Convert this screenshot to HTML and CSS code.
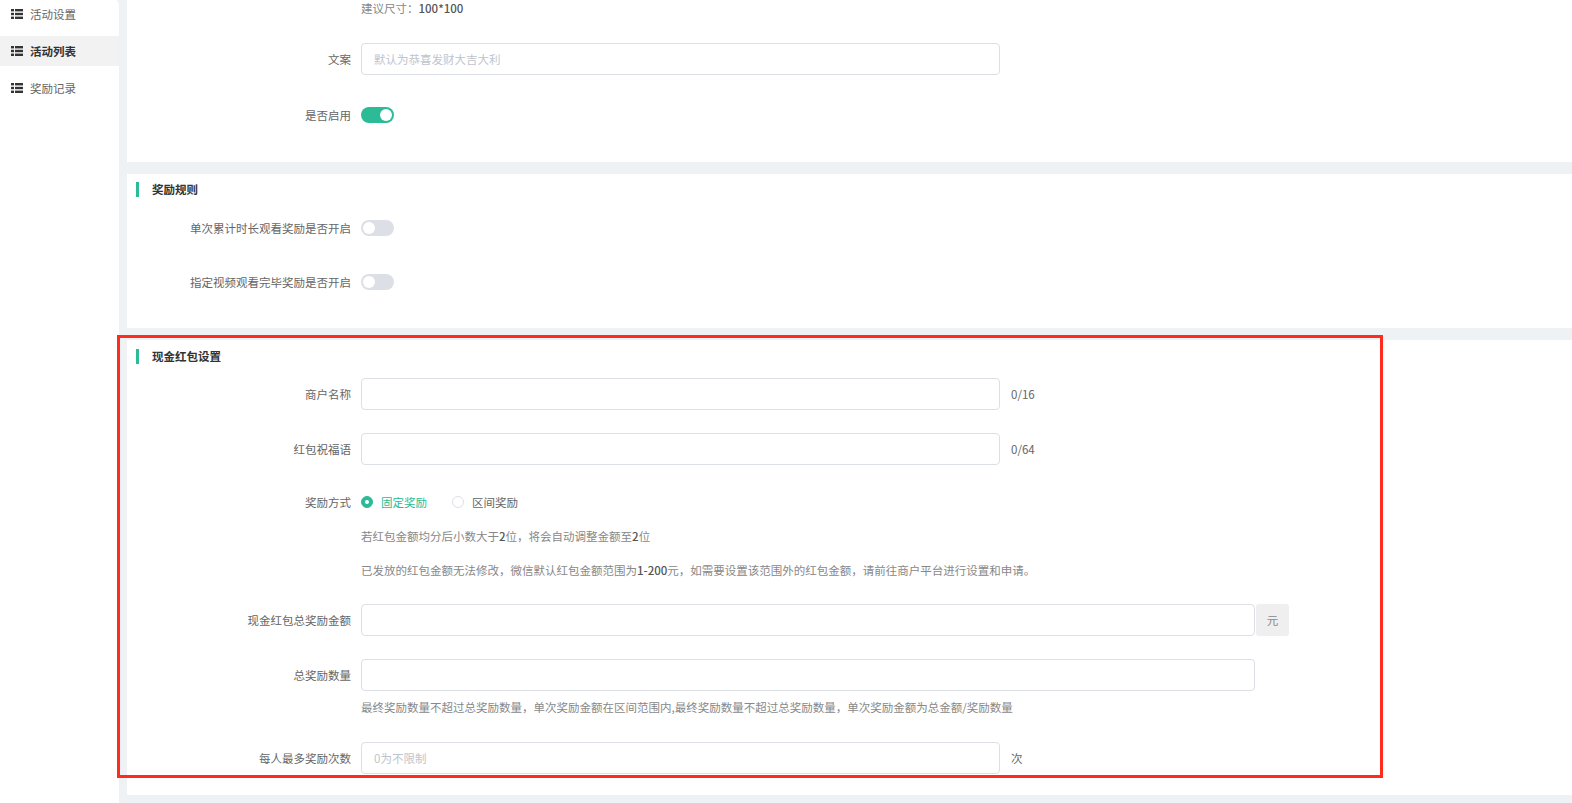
FILE: index.html
```html
<!DOCTYPE html>
<html lang="zh-CN">
<head>
<meta charset="utf-8">
<title>现金红包设置</title>
<link rel="stylesheet" href="styles.css">
</head>
<body>
<div class="app">
  <aside class="sidebar">
    <div class="nav-item">
      <svg class="nav-icon" viewBox="0 0 12 10" width="12" height="10"><rect x="0" y="0" width="3" height="2.4"/><rect x="4" y="0" width="8" height="2.4"/><rect x="0" y="3.8" width="3" height="2.4"/><rect x="4" y="3.8" width="8" height="2.4"/><rect x="0" y="7.6" width="3" height="2.4"/><rect x="4" y="7.6" width="8" height="2.4"/></svg>
      <span>活动设置</span>
    </div>
    <div class="nav-item active">
      <svg class="nav-icon" viewBox="0 0 12 10" width="12" height="10"><rect x="0" y="0" width="3" height="2.4"/><rect x="4" y="0" width="8" height="2.4"/><rect x="0" y="3.8" width="3" height="2.4"/><rect x="4" y="3.8" width="8" height="2.4"/><rect x="0" y="7.6" width="3" height="2.4"/><rect x="4" y="7.6" width="8" height="2.4"/></svg>
      <span>活动列表</span>
    </div>
    <div class="nav-item">
      <svg class="nav-icon" viewBox="0 0 12 10" width="12" height="10"><rect x="0" y="0" width="3" height="2.4"/><rect x="4" y="0" width="8" height="2.4"/><rect x="0" y="3.8" width="3" height="2.4"/><rect x="4" y="3.8" width="8" height="2.4"/><rect x="0" y="7.6" width="3" height="2.4"/><rect x="4" y="7.6" width="8" height="2.4"/></svg>
      <span>奖励记录</span>
    </div>
  </aside>

  <main class="main">
    <section class="card card-basic">
      <div class="hint-row size-hint">建议尺寸：<span class="num">100*100</span></div>
      <div class="form-item row-copy">
        <label class="form-label">文案</label>
        <div class="input normal"><span class="placeholder">默认为恭喜发财大吉大利</span></div>
      </div>
      <div class="form-item row-enable">
        <label class="form-label">是否启用</label>
        <span class="switch on"><span class="knob"></span></span>
      </div>
    </section>

    <section class="card card-rules">
      <h3 class="section-title">奖励规则</h3>
      <div class="form-item row-rule1">
        <label class="form-label">单次累计时长观看奖励是否开启</label>
        <span class="switch"><span class="knob"></span></span>
      </div>
      <div class="form-item row-rule2">
        <label class="form-label">指定视频观看完毕奖励是否开启</label>
        <span class="switch"><span class="knob"></span></span>
      </div>
    </section>

    <section class="card card-cash">
      <h3 class="section-title">现金红包设置</h3>
      <div class="form-item row-merchant">
        <label class="form-label">商户名称</label>
        <div class="input normal"></div>
        <span class="suffix">0/16</span>
      </div>
      <div class="form-item row-wish">
        <label class="form-label">红包祝福语</label>
        <div class="input normal"></div>
        <span class="suffix">0/64</span>
      </div>
      <div class="form-item row-mode">
        <label class="form-label">奖励方式</label>
        <div class="radio-group">
          <span class="radio checked"><span class="radio-dot"></span><span class="radio-text">固定奖励</span></span>
          <span class="radio"><span class="radio-dot"></span><span class="radio-text">区间奖励</span></span>
        </div>
      </div>
      <div class="hint-row hint-1">若红包金额均分后小数大于<span class="num">2</span>位，将会自动调整金额至<span class="num">2</span>位</div>
      <div class="hint-row hint-2">已发放的红包金额无法修改，微信默认红包金额范围为<span class="num">1-200</span>元，如需要设置该范围外的红包金额，请前往商户平台进行设置和申请。</div>
      <div class="form-item row-total">
        <label class="form-label">现金红包总奖励金额</label>
        <div class="input wide"></div>
        <span class="addon">元</span>
      </div>
      <div class="form-item row-count">
        <label class="form-label">总奖励数量</label>
        <div class="input wide"></div>
      </div>
      <div class="hint-row hint-3">最终奖励数量不超过总奖励数量，单次奖励金额在区间范围内,最终奖励数量不超过总奖励数量，单次奖励金额为总金额/奖励数量</div>
      <div class="form-item row-times">
        <label class="form-label">每人最多奖励次数</label>
        <div class="input normal"><span class="placeholder">0为不限制</span></div>
        <span class="suffix">次</span>
      </div>
    </section>
  </main>
</div>
<div class="annotation"></div>
</body>
</html>
```

FILE: styles.css
```css
* { box-sizing: border-box; }

html, body {
  margin: 0;
  padding: 0;
  height: 803px;
  overflow: hidden;
  background: #eff2f5;
  font-family: "Noto Sans CJK SC", "Microsoft YaHei", sans-serif;
  font-size: 11.5px;
  color: #666;
}

.app {
  display: flex;
  height: 803px;
}

/* Sidebar */
.sidebar {
  width: 119px;
  flex: none;
  background: #fff;
  border-top-right-radius: 6px;
  padding-top: 0;
  margin-top: -1px;
}

.nav-item {
  height: 30px;
  margin-bottom: 7px;
  display: flex;
  align-items: center;
  padding-left: 11px;
  gap: 7px;
  color: #666;
}

.nav-item.active {
  background: #f2f2f2;
  color: #333;
  font-weight: bold;
}

.nav-icon {
  fill: #333;
  flex: none;
}

/* Main */
.main {
  flex: 1;
  display: flex;
  flex-direction: column;
  gap: 12px;
  padding-left: 8px;
  min-width: 0;
}

.card {
  background: #fff;
  flex: none;
}

.card-basic {
  height: 162px;
  padding-top: 0;
}

.card-rules {
  height: 154px;
  padding-top: 8px;
}

.card-cash {
  height: 455px;
  padding-top: 9px;
}

.section-title {
  margin: 0 0 0 9px;
  height: 15px;
  border-left: 3px solid #2bbb96;
  padding-left: 13px;
  font-size: 11.5px;
  line-height: 15px;
  font-weight: bold;
  color: #333;
}

/* Form items */
.form-item {
  display: flex;
  align-items: center;
  min-height: 32px;
}

.form-label {
  width: 234px;
  flex: none;
  text-align: right;
  padding-right: 10px;
  color: #666;
  line-height: 16px;
}

.input {
  height: 32px;
  border: 1px solid #dcdfe6;
  border-radius: 4px;
  background: #fff;
  display: flex;
  align-items: center;
  padding: 0 12px;
  flex: none;
}

.input.normal { width: 639px; }
.input.wide { width: 894px; }

.placeholder {
  color: #c0c4cc;
}

.suffix {
  margin-left: 11px;
  color: #666;
}

.addon {
  width: 33px;
  height: 32px;
  margin-left: 1px;
  background: #efefef;
  border-radius: 3px;
  display: flex;
  align-items: center;
  justify-content: center;
  color: #888;
}

.hint-row {
  padding-left: 234px;
  line-height: 16px;
  color: #888;
}

.num {
  color: #555;
  font-weight: 500;
}

.size-hint { margin-top: 0; }

/* vertical rhythm */
.row-copy { margin-top: 27px; }
.row-enable { margin-top: 24px; }

.row-rule1 { margin-top: 15px; }
.row-rule2 { margin-top: 22px; }

.row-merchant { margin-top: 14px; }
.row-wish { margin-top: 23px; }
.row-mode { margin-top: 21px; }
.hint-1 { margin-top: 10px; }
.hint-2 { margin-top: 18px; }
.row-total { margin-top: 26px; }
.row-count { margin-top: 23px; }
.hint-3 { margin-top: 8px; }
.row-times { margin-top: 27px; }

/* Switch */
.switch {
  width: 33px;
  height: 16px;
  border-radius: 8px;
  background: #dcdfe6;
  position: relative;
  flex: none;
}

.switch.on {
  background: #2bbb96;
}

.switch .knob {
  position: absolute;
  top: 2px;
  left: 2px;
  width: 12px;
  height: 12px;
  border-radius: 50%;
  background: #fff;
}

.switch.on .knob {
  left: 19px;
}

/* Radio */
.radio-group {
  display: flex;
  align-items: center;
  gap: 25px;
}

.radio {
  display: flex;
  align-items: center;
  gap: 8px;
  color: #666;
}

.radio-dot {
  width: 12px;
  height: 12px;
  border-radius: 50%;
  border: 1px solid #dcdfe6;
  background: #fff;
  position: relative;
}

.radio.checked .radio-dot {
  border-color: #2bbb96;
  background: #2bbb96;
}

.radio.checked .radio-dot::after {
  content: "";
  position: absolute;
  left: 3px;
  top: 3px;
  width: 4px;
  height: 4px;
  border-radius: 50%;
  background: #fff;
}

.radio.checked .radio-text {
  color: #2bbb96;
}

/* Red annotation overlay */
.annotation {
  position: absolute;
  left: 117px;
  top: 335px;
  width: 1266px;
  height: 443px;
  border: 3px solid #ff2b1c;
  pointer-events: none;
}
```
